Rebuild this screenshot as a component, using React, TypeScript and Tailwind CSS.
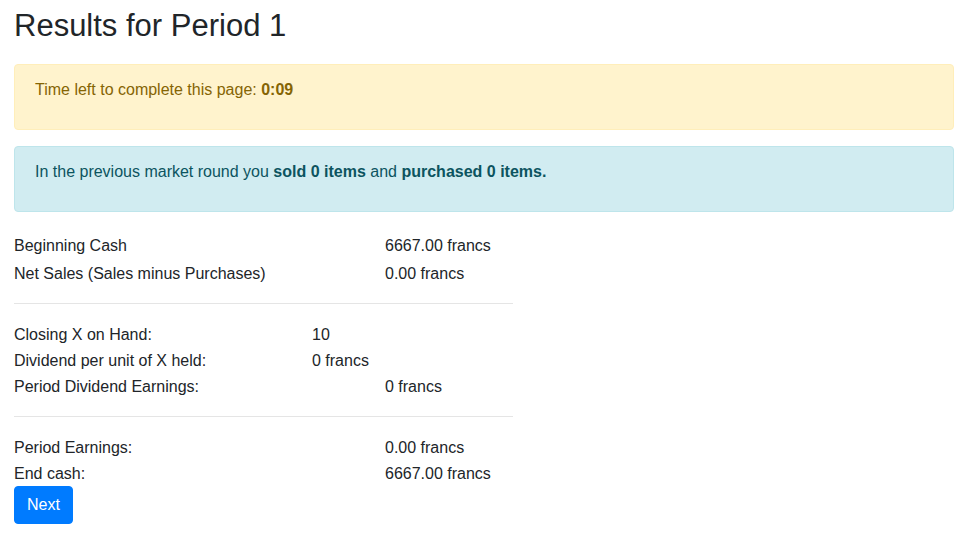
import React from "react";

interface Row {
  label: string;
  mid?: string;
  value?: string;
}

const cash: Row[] = [
  {label: "Beginning Cash", value: "6667.00 francs"},
  {label: "Net Sales (Sales minus Purchases)", value: "0.00 francs"},
];

const dividends: Row[] = [
  {label: "Closing X on Hand:", mid: "10"},
  {label: "Dividend per unit of X held:", mid: "0 francs"},
  {label: "Period Dividend Earnings:", value: "0 francs"},
];

const totals: Row[] = [
  {label: "Period Earnings:", value: "0.00 francs"},
  {label: "End cash:", value: "6667.00 francs"},
];

function Rows({rows, rowClass}: {rows: Row[]; rowClass: string}) {
  return (
    <div className="grid grid-cols-[298px_73px_1fr]">
      {rows.map((r) => (
        <React.Fragment key={r.label}>
          <div className={`${rowClass} whitespace-nowrap`}>{r.label}</div>
          <div className={rowClass}>{r.mid ?? ""}</div>
          <div className={`${rowClass} whitespace-nowrap`}>{r.value ?? ""}</div>
        </React.Fragment>
      ))}
    </div>
  );
}

export default function App() {
  return (
    <div className="min-h-screen bg-white font-['Liberation_Sans',Arial,sans-serif] text-base leading-6 text-[#212529]">
      <div className="w-[968px] px-[14px]">
        {/* Header */}
        <h1 className="pt-[7px] mb-[19px] text-[31px] leading-[38px] font-medium">Results for Period 1</h1>

        {/* Timer */}
        <div className="mb-4 rounded border border-[#ffeeba] bg-[#fff3cd] px-5 pt-[13px] pb-[27px] text-[#856404]">
          Time left to complete this page: <span className="font-bold">0:09</span>
        </div>

        {/* Market summary */}
        <div className="rounded border border-[#bee5eb] bg-[#d1ecf1] px-5 pt-[13px] pb-[27px] text-[#0c5460]">
          In the previous market round you <span className="font-bold">sold 0 items</span> and{" "}
          <span className="font-bold">purchased 0 items.</span>
        </div>

        {/* Results table */}
        <div className="w-[499px] mt-[19px]">
          <Rows rows={cash} rowClass="pt-[3px] pb-[1px]" />
          <div className="mt-4 border-t border-black/10" />
          <div className="mt-[17px]">
            <Rows rows={dividends} rowClass="pt-[2px]" />
          </div>
          <div className="mt-[17px] border-t border-black/10" />
          <div className="mt-[17px]">
            <Rows rows={totals} rowClass="pt-[2px]" />
          </div>
        </div>

        <button className="rounded border border-[#007bff] bg-[#007bff] px-3 py-[6px] text-white leading-6">
          Next
        </button>
      </div>
    </div>
  );
}
